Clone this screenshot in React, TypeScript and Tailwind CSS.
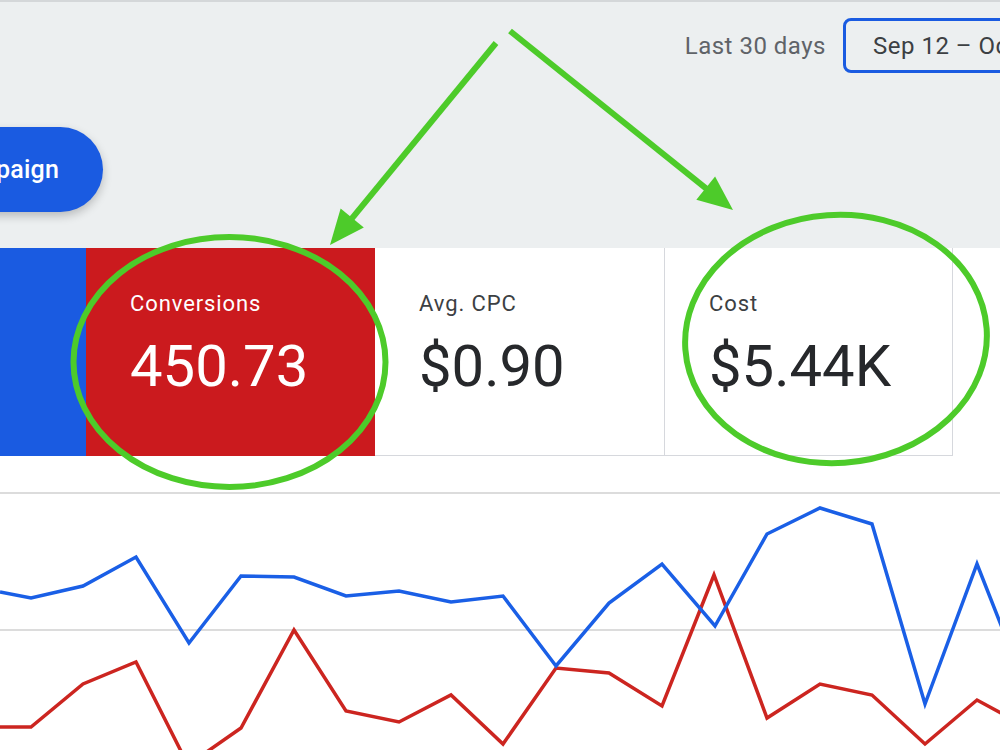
import React from "react";

const BLUE = "#1a5be1";
const GREEN = "#4dcb2a";

const bluePts: [number, number][] = [
  [0, 592], [31, 598], [83, 586], [136, 557], [189, 643], [241, 576], [294, 577],
  [346, 596], [399, 591], [451, 602], [503, 596], [556, 666], [609, 603], [662, 564],
  [715, 626], [767, 534], [820, 508], [872, 524], [925, 704], [977, 564], [1010, 648],
];
const redPts: [number, number][] = [
  [0, 727], [31, 727], [83, 684], [136, 662], [188, 765], [241, 728], [294, 630],
  [346, 711], [399, 722], [451, 695], [503, 744], [556, 668], [609, 673], [662, 706],
  [714, 575], [767, 718], [820, 684], [872, 695], [925, 744], [977, 700], [1010, 718],
];

function toPoints(pts: [number, number][], offY: number) {
  return pts.map(([x, y]) => `${x},${y - offY}`).join(" ");
}

function Arrow({ x1, y1, x2, y2 }: { x1: number; y1: number; x2: number; y2: number }) {
  const dx = x2 - x1;
  const dy = y2 - y1;
  const len = Math.hypot(dx, dy);
  const ux = dx / len;
  const uy = dy / len;
  const px = -uy;
  const py = ux;
  const L = 35;
  const W = 15;
  const bx = x2 - ux * L;
  const by = y2 - uy * L;
  const pts = `${x2},${y2} ${bx + px * W},${by + py * W} ${bx - px * W},${by - py * W}`;
  return (
    <g>
      <line x1={x1} y1={y1} x2={bx + ux * 4} y2={by + uy * 4} stroke={GREEN} strokeWidth={6} />
      <polygon points={pts} fill={GREEN} />
    </g>
  );
}

function Card({
  label,
  value,
  className,
  dark,
}: {
  label: string;
  value: string;
  className: string;
  dark?: boolean;
}) {
  return (
    <div className={`w-[289px] h-[208px] shrink-0 pl-[44px] pt-[44px] box-border ${className}`}>
      <div
        className={`text-[22px] leading-[24px] tracking-[0.9px] ${dark ? "text-white" : "text-[#3c4043]"}`}
      >
        {label}
      </div>
      <div
        className={`mt-[21px] text-[58px] leading-none ${dark ? "text-white" : "text-[#26282b]"}`}
      >
        {value}
      </div>
    </div>
  );
}

export default function App() {
  return (
    <div
      className="relative w-[1000px] h-[750px] overflow-hidden bg-white"
      style={{ fontFamily: "Roboto, 'Noto Sans', Arial, sans-serif" }}
    >
      {/* Header */}
      <div className="h-[248px] bg-[#eceff0] border-t-[2px] border-[#d4d7d9] box-border overflow-hidden">
        <div className="flex justify-end items-center gap-[17px] pt-[16px]">
          <span className="text-[24px] tracking-[0.5px] text-[#5f6368]">Last 30 days</span>
          <div className="w-[180px] -mr-[23px] h-[55px] rounded-[8px] border-[3px] border-[#1a5be1] box-border flex items-center pl-[27px] text-[24px] tracking-[0.5px] text-[#3c4043] whitespace-nowrap overflow-hidden">
            Sep 12 – Oct 11, 2024
          </div>
        </div>
        <div className="mt-[54px] flex">
          <div className="-ml-[178px] w-[281px] h-[85px] rounded-full bg-[#1a5be1] shadow-[0_4px_10px_rgba(0,0,0,0.22)] flex items-center justify-end pr-[44px] text-white text-[25px] font-medium tracking-[0.2px] whitespace-nowrap">
            New campaign
          </div>
        </div>
      </div>

      {/* Cards */}
      <div className="flex h-[209px]">
        <div className="w-[86px] h-[208px] shrink-0" style={{ background: BLUE }} />
        <Card label="Conversions" value="450.73" className="bg-[#cb1a1e]" dark />
        <Card label="Avg. CPC" value="$0.90" className="bg-white border-b border-[#d6d8dd]" />
        <Card
          label="Cost"
          value="$5.44K"
          className="bg-white border-b border-l border-r border-[#d6d8dd]"
        />
      </div>

      {/* Chart */}
      <div className="mt-[35px] border-t-2 border-[#dcdcdc]">
        <svg width={1000} height={256} className="block">
          <line x1={0} y1={136} x2={1000} y2={136} stroke="#dcdcdc" strokeWidth={2} />
          <polyline
            points={toPoints(redPts, 494)}
            fill="none"
            stroke="#cc2520"
            strokeWidth={3.5}
            strokeLinejoin="miter"
          />
          <polyline
            points={toPoints(bluePts, 494)}
            fill="none"
            stroke="#1a5fe6"
            strokeWidth={3.5}
            strokeLinejoin="miter"
          />
        </svg>
      </div>

      {/* Annotations */}
      <svg className="absolute inset-0 pointer-events-none" width={1000} height={750}>
        <ellipse cx={229.5} cy={362} rx={156} ry={125} fill="none" stroke={GREEN} strokeWidth={6} />
        <ellipse
          cx={836}
          cy={339}
          rx={151}
          ry={124}
          fill="none"
          stroke={GREEN}
          strokeWidth={6}
          transform="rotate(-4 836 339)"
        />
        <Arrow x1={496} y1={43} x2={330} y2={245} />
        <Arrow x1={510} y1={31} x2={733} y2={210} />
      </svg>
    </div>
  );
}
